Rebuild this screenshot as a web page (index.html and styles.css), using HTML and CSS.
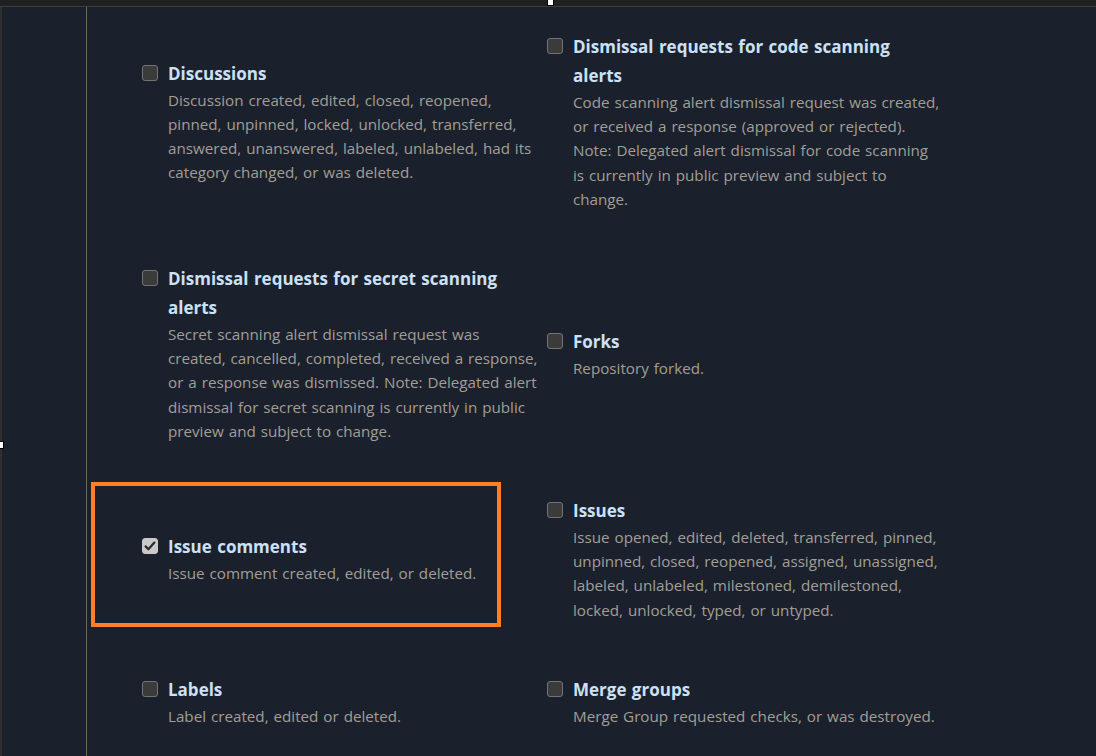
FILE: index.html
```html
<!DOCTYPE html>
<html lang="en">
<head>
<meta charset="utf-8">
<title>Events</title>
<link rel="stylesheet" href="styles.css">
</head>
<body>
<div class="topbar"></div>
<div class="app">
  <div class="edge"></div>
  <div class="sidebar"></div>
  <main class="main">
    <div class="grid">
      <label class="item">
        <span class="cb"></span>
        <span class="text">
          <span class="title">Discussions</span>
          <span class="desc">Discussion created, edited, closed, reopened, pinned, unpinned, locked, unlocked, transferred, answered, unanswered, labeled, unlabeled, had its category changed, or was deleted.</span>
        </span>
      </label>
      <label class="item">
        <span class="cb"></span>
        <span class="text">
          <span class="title">Dismissal requests for code scanning alerts</span>
          <span class="desc">Code scanning alert dismissal request was created, or received a response (approved or rejected). Note: Delegated alert dismissal for code scanning is currently in public preview and subject to change.</span>
        </span>
      </label>
      <label class="item">
        <span class="cb"></span>
        <span class="text">
          <span class="title">Dismissal requests for secret scanning alerts</span>
          <span class="desc">Secret scanning alert dismissal request was created, cancelled, completed, received a response, or a response was dismissed. Note: Delegated alert dismissal for secret scanning is currently in public preview and subject to change.</span>
        </span>
      </label>
      <label class="item">
        <span class="cb"></span>
        <span class="text">
          <span class="title">Forks</span>
          <span class="desc">Repository forked.</span>
        </span>
      </label>
      <label class="item">
        <span class="cb checked"><svg viewBox="0 0 16 16" width="16" height="16"><path d="M3.6 8.4 6.4 11.2 12.4 4.6" fill="none" stroke="#2d2d2d" stroke-width="2.3" stroke-linecap="round" stroke-linejoin="round"/></svg></span>
        <span class="text">
          <span class="title">Issue comments</span>
          <span class="desc">Issue comment created, edited, or deleted.</span>
        </span>
      </label>
      <label class="item">
        <span class="cb"></span>
        <span class="text">
          <span class="title">Issues</span>
          <span class="desc">Issue opened, edited, deleted, transferred, pinned, unpinned, closed, reopened, assigned, unassigned, labeled, unlabeled, milestoned, demilestoned, locked, unlocked, typed, or untyped.</span>
        </span>
      </label>
      <label class="item">
        <span class="cb"></span>
        <span class="text">
          <span class="title">Labels</span>
          <span class="desc">Label created, edited or deleted.</span>
        </span>
      </label>
      <label class="item">
        <span class="cb"></span>
        <span class="text">
          <span class="title">Merge groups</span>
          <span class="desc">Merge Group requested checks, or was destroyed.</span>
        </span>
      </label>
    </div>
  </main>
</div>
<div class="highlight"></div>
<div class="handle handle-top"></div>
<div class="handle handle-left"></div>
</body>
</html>
```
FILE: styles.css
```css
html, body {
  margin: 0;
  padding: 0;
  height: 756px;
  overflow: hidden;
  background: #1b212c;
  font-family: "Open Sans", "Noto Sans", "DejaVu Sans", sans-serif;
}

.topbar {
  height: 6px;
  background: #202020;
  border-bottom: 1px solid #3e3e3e;
}

.app {
  display: flex;
  height: 749px;
}

.edge {
  width: 2px;
  background: #2f2f2f;
  flex: none;
}

.sidebar {
  width: 84px;
  flex: none;
  border-right: 1px solid #6c675b;
}

.main {
  flex: 1;
}

.grid {
  display: grid;
  grid-template-columns: 405px 405px;
  row-gap: 53px;
  align-items: center;
  padding: 25px 0 0 55px;
}

.item {
  display: flex;
  align-items: flex-start;
  gap: 10px;
}

.cb {
  flex: none;
  box-sizing: border-box;
  width: 16px;
  height: 16px;
  margin-top: 6px;
  border: 1.5px solid #737373;
  border-radius: 3px;
  background: #3b3b3b;
  display: flex;
}

.cb.checked {
  background: #c9c9c9;
  border-color: #c9c9c9;
}

.cb svg {
  margin: -1.5px;
}

.text {
  display: flex;
  flex-direction: column;
  width: 370.3px;
  word-spacing: 1px;
}

.title {
  font-size: 17px;
  font-weight: 700;
  line-height: 29px;
  color: #cce0f6;
}

.desc {
  font-size: 15.2px;
  line-height: 24.2px;
  color: #a29e97;
}

.highlight {
  position: absolute;
  left: 91px;
  top: 482px;
  width: 402px;
  height: 137px;
  border: 4px solid #ff7f27;
}

.handle {
  position: absolute;
  background: #ffffff;
  border: 1px solid #000000;
  box-sizing: border-box;
}

.handle-top {
  left: 547px;
  top: -1px;
  width: 7px;
  height: 7px;
}

.handle-left {
  left: -1px;
  top: 441px;
  width: 5px;
  height: 8px;
}
```
